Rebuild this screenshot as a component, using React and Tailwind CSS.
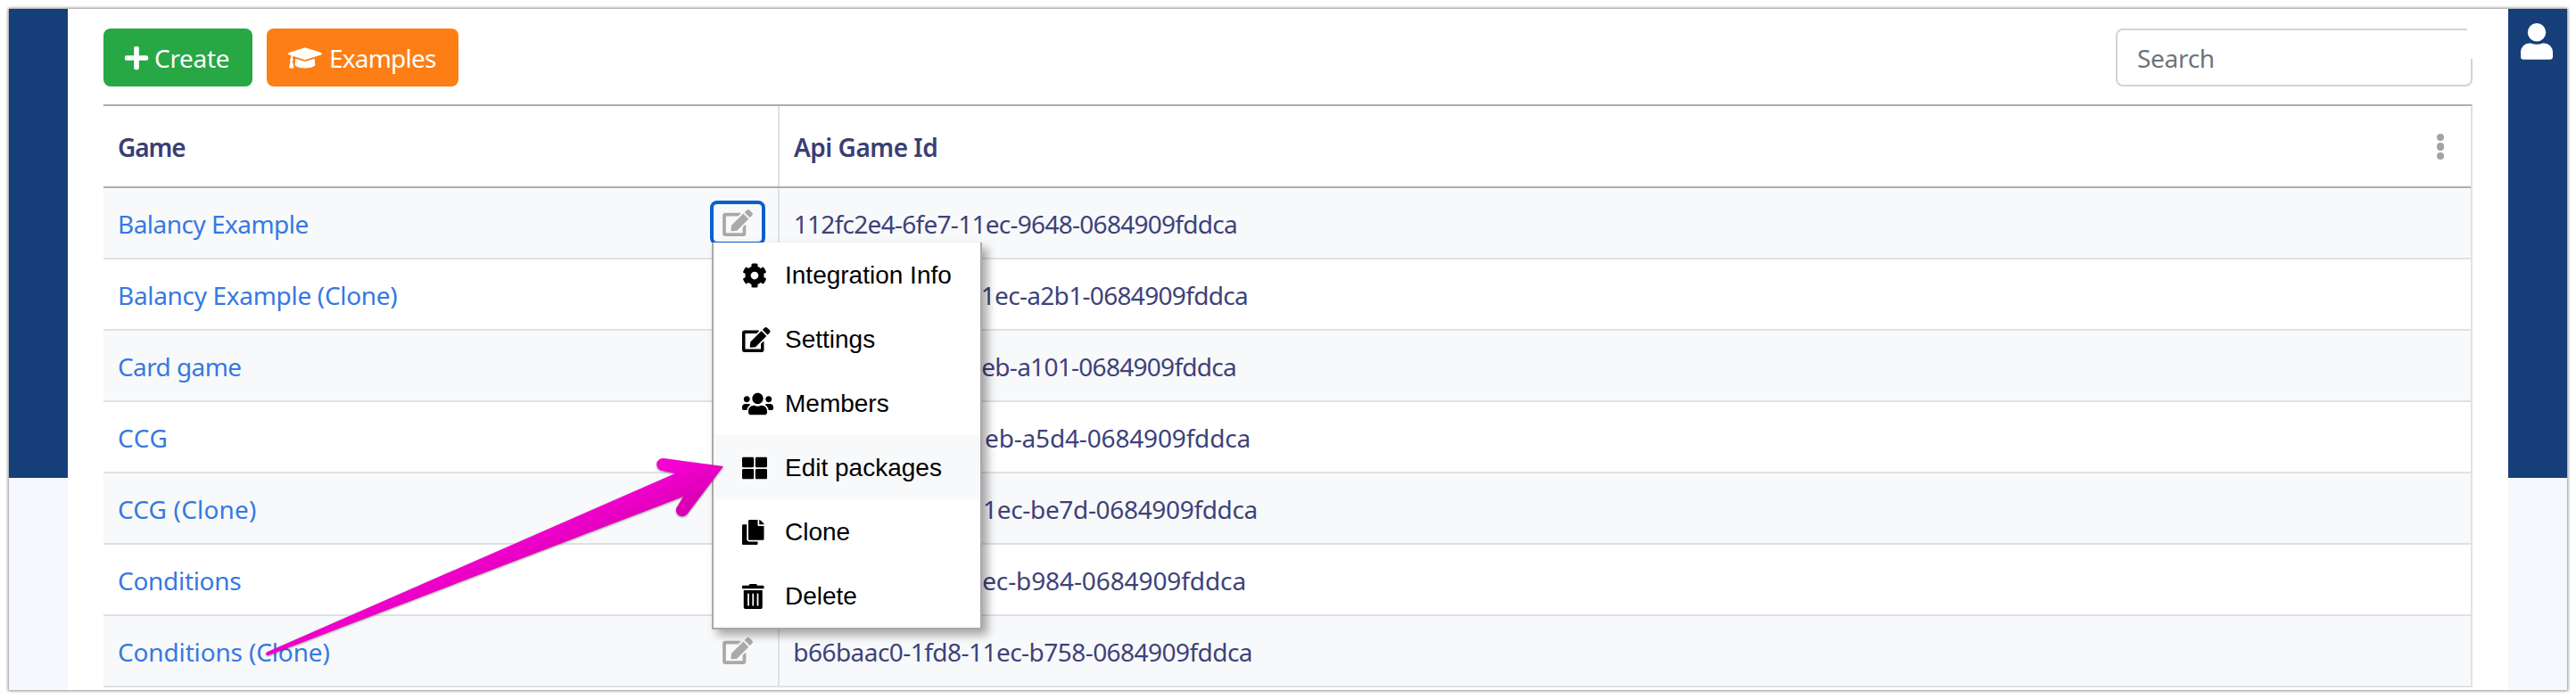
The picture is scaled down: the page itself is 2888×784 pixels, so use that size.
import { FaCog, FaUsers, FaThLarge, FaCopy, FaTrashAlt, FaPlus, FaGraduationCap, FaEdit } from "react-icons/fa";

// The open menu covers the start of the ids in rows 2-6; those cells hold the visible tail, aligned to its end.
const rows = [
  { name: "Balancy Example", track: "tracking-[-0.53px]", id: "112fc2e4-6fe7-11ec-9648-0684909fddca", box: "w-[513px] tracking-[-0.72px]", active: true },
  { name: "Balancy Example (Clone)", track: "tracking-[-0.32px]", id: "1ec-a2b1-0684909fddca", box: "w-[525px] tracking-[-0.68px]" },
  { name: "Card game", track: "tracking-[-0.6px]", id: "eb-a101-0684909fddca", box: "w-[512px] tracking-[-0.72px]" },
  { name: "CCG", track: "tracking-[0.6px]", id: "eb-a5d4-0684909fddca", box: "w-[528px] tracking-[-0.17px]" },
  { name: "CCG (Clone)", track: "tracking-[0.16px]", id: "1ec-be7d-0684909fddca", box: "w-[536px] tracking-[-0.33px]" },
  { name: "Conditions", track: "tracking-[-0.3px]", id: "ec-b984-0684909fddca", box: "w-[523px] tracking-[-0.1px]" },
  { name: "Conditions (Clone)", track: "tracking-[-0.15px]", id: "b66baac0-1fd8-11ec-b758-0684909fddca", box: "w-[530px] tracking-[-0.54px]" },
];

const items = [
  { label: "Integration Info", Icon: FaCog, size: "w-[28px]" },
  { label: "Settings", Icon: FaEdit, size: "w-[31.5px]" },
  { label: "Members", Icon: FaUsers, size: "w-[35px]" },
  { label: "Edit packages", Icon: FaThLarge, size: "w-[28px]", hover: true },
  { label: "Clone", Icon: FaCopy, size: "w-[24.5px]" },
  { label: "Delete", Icon: FaTrashAlt, size: "w-[24.5px]" },
];

function Menu() {
  return (
    <div className="absolute left-[788px] top-[262px] z-10 w-[303px] border-2 border-t-0 border-[#a9a9a9] bg-white font-['Liberation_Sans',sans-serif] text-[28px] text-black shadow-[6px_6px_10px_rgba(0,0,0,0.35)]">
      {items.map(({ label, Icon, size, hover }) => (
        <div key={label} className={`flex h-[72px] items-center pl-8 pt-px ${hover ? "bg-[#f8f9fb]" : "bg-white"}`}>
          <span className="flex w-12 shrink-0">
            <Icon className={`h-7 shrink-0 ${size}`} />
          </span>
          <span className="whitespace-nowrap">{label}</span>
        </div>
      ))}
    </div>
  );
}

function Arrow() {
  return (
    <svg
      className="absolute left-[280px] top-[490px] z-20 drop-shadow-[0_1px_1px_rgba(0,0,0,0.4)]"
      width="540"
      height="260"
      viewBox="290 500 540 260"
    >
      <defs>
        <linearGradient id="arrow" gradientUnits="userSpaceOnUse" x1="740" y1="533" x2="756" y2="570">
          <stop offset="0" stopColor="#f400d0" />
          <stop offset="1" stopColor="#db00b6" />
        </linearGradient>
      </defs>
      <path
        d="M299.5 731.2 L757 531 L742.5 528 A7 7 0 0 1 744 514 L811 523 L770.5 576.5 A7 7 0 0 1 758.5 569.5 L766 557 L301 735 A2 2 0 0 1 299.5 731.2 Z"
        fill="url(#arrow)"
      />
    </svg>
  );
}

function UserIcon() {
  return (
    <svg className="mr-0.5" width="36" height="41" viewBox="0 0 36 41" fill="currentColor">
      <circle cx="18" cy="10.2" r="10.2" />
      <path d="M9.5 22.6 H11.5 Q18 25 24.5 22.6 H26.5 A9.5 10 0 0 1 36 32.5 V37.5 A3.2 3.2 0 0 1 32.8 40.7 H3.2 A3.2 3.2 0 0 1 0 37.5 V32.5 A9.5 10 0 0 1 9.5 22.6 Z" />
    </svg>
  );
}

export default function App() {
  return (
    <div className="h-[784px] w-[2888px] overflow-hidden bg-white p-[10px] pb-0 font-['Noto_Sans',sans-serif] text-[28px]">
      <div className="relative flex h-[764px] w-[2868px] bg-white shadow-[0_0_3px_1px_rgba(0,0,0,0.45)]">
        <aside className="flex w-[66px] shrink-0 flex-col bg-[#f5f8fd]">
          <div className="h-[526px] bg-[#163f79]" />
        </aside>
        <main className="flex min-w-0 flex-1 flex-col overflow-hidden pl-10 pr-10 pt-[22px]">
          <div className="flex h-[65px] shrink-0 justify-between">
            <div className="flex gap-4 text-white">
              <button className="flex h-[65px] w-[167px] items-center gap-[6px] rounded-lg bg-[#28a745] pl-[23px]">
                <FaPlus className="h-[30px] w-[28px]" />
                <span className="tracking-[-0.3px]">Create</span>
              </button>
              <button className="flex h-[65px] w-[215px] items-center gap-2 rounded-lg bg-[#fd7e14] pl-6">
                <FaGraduationCap className="h-8 w-[38px]" />
                <span className="tracking-[-0.8px]">Examples</span>
              </button>
            </div>
            <div className="relative flex w-[400px] items-center rounded-lg border-2 border-[#ced4da] pl-[22px] tracking-[-0.3px] text-[#6c757d]">
              Search
              <span className="absolute -right-0.5 -top-0.5 h-[34px] w-[6px] bg-white" />
            </div>
          </div>
          <div className="mt-5 w-[2656px] shrink-0 border-r-2 border-t-2 border-[#dee2e6] border-t-[#adadad]">
            <div className="flex h-[92px] border-b-2 border-[#adadad] font-semibold text-[#3a3e75]">
              <div className="flex w-[758px] items-center border-r-2 border-[#dee2e6] pl-4 pt-px tracking-[-1.1px]">Game</div>
              <div className="flex flex-1 items-center justify-between pl-4 pr-[30px] pt-px tracking-[-0.5px]">
                Api Game Id
                <span className="flex flex-col gap-[2px]">
                  <i className="size-[8.5px] rounded-full bg-[#a3a3a3]" />
                  <i className="size-[8.5px] rounded-full bg-[#a3a3a3]" />
                  <i className="size-[8.5px] rounded-full bg-[#a3a3a3]" />
                </span>
              </div>
            </div>
            {rows.map((r, i) => (
              <div key={r.name} className={`flex h-[80px] border-b-2 border-[#dee2e6] ${i % 2 ? "bg-white" : "bg-[#f8f9fb]"}`}>
                <div className="flex w-[758px] items-center justify-between border-r-2 border-[#dee2e6] pl-4 pr-[14px] text-[#3679df]">
                  <span className={`pt-px ${r.track}`}>{r.name}</span>
                  <span className={`flex h-[50px] w-[62px] items-center justify-center rounded-lg border-4 text-[#a9a9a9] ${r.active ? "border-[#0a5fd0]" : "border-transparent"}`}>
                    {(i === 0 || i === 6) && <FaEdit className="h-[30px] w-[34px]" />}
                  </span>
                </div>
                <div className="flex flex-1 items-center pt-px text-[#3d4279]">
                  <span className={`flex justify-end whitespace-nowrap ${r.box}`}>{r.id}</span>
                </div>
              </div>
            ))}
          </div>
        </main>
        <aside className="flex w-[66px] shrink-0 flex-col bg-[#f5f8fd]">
          <div className="flex h-[526px] justify-center bg-[#163f79] pt-4 text-white">
            <UserIcon />
          </div>
        </aside>
        <Menu />
        <Arrow />
      </div>
    </div>
  );
}
